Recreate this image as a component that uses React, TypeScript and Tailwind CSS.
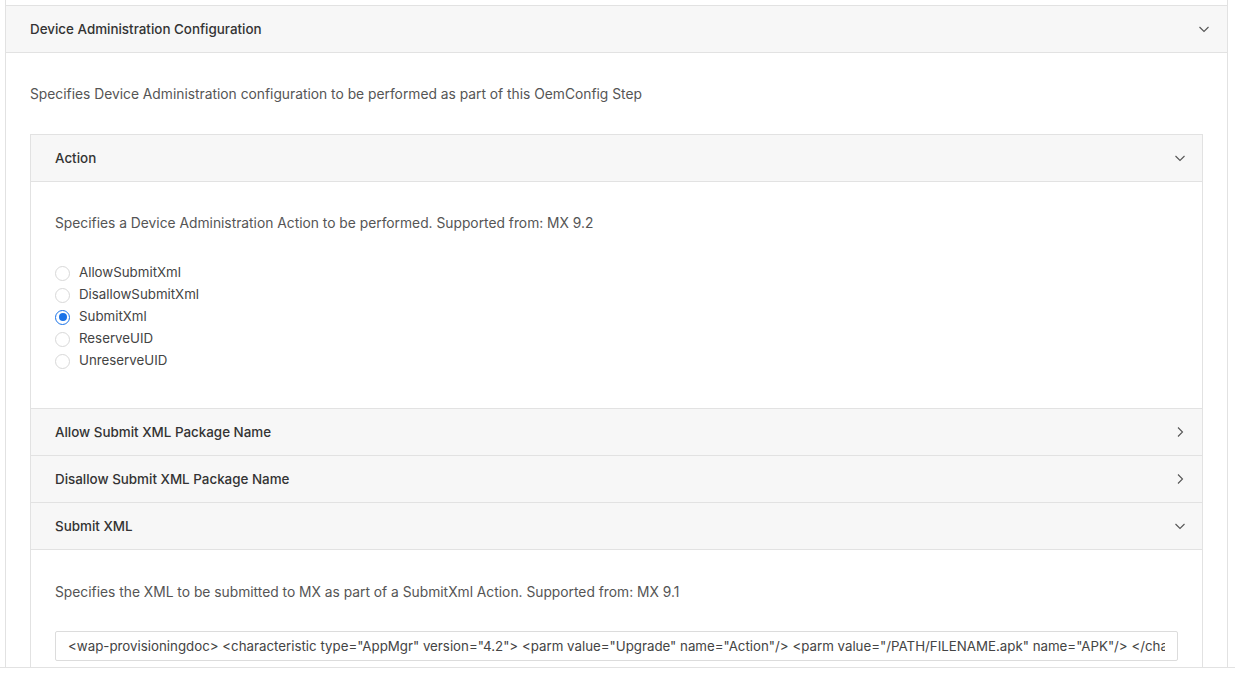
import type { ReactNode } from "react";

const FONT = "font-['Inter','Noto_Sans',sans-serif]";

function Chevron({ open }: { open: boolean }) {
  return (
    <svg
      width="12"
      height="12"
      viewBox="0 0 12 12"
      fill="none"
      stroke="#555"
      strokeWidth="1.1"
      className={open ? "" : "-rotate-90"}
    >
      <path d="M1.5 4l4.5 4.5L10.5 4" />
    </svg>
  );
}

function PanelHeader({ title, open, first }: { title: string; open: boolean; first?: boolean }) {
  return (
    <div
      className={`flex items-center justify-between bg-[#f7f7f7] pl-6 pr-[16px] ${
        first ? "h-[46px]" : "h-[47px] border-t border-[#e2e2e2]"
      }`}
    >
      <span className="text-[13.4px] font-medium text-[#333]">{title}</span>
      <Chevron open={open} />
    </div>
  );
}

function Radio({ label, checked }: { label: string; checked?: boolean }) {
  return (
    <label className="flex h-[22px] items-center gap-[9px]">
      <span
        className={`flex h-[15px] w-[15px] items-center justify-center rounded-full border ${
          checked ? "border-[#1a73e8]" : "border-[#d8d8d8]"
        }`}
      >
        {checked && <span className="h-[8px] w-[8px] rounded-full bg-[#1a73e8]" />}
      </span>
      <span className="text-[13.3px] text-[#444]">{label}</span>
    </label>
  );
}

function Desc({ children }: { children: ReactNode }) {
  return <p className="text-[13.8px] leading-[18px] text-[#555]">{children}</p>;
}

const ACTIONS = ["AllowSubmitXml", "DisallowSubmitXml", "SubmitXml", "ReserveUID", "UnreserveUID"];

const XML =
  '<wap-provisioningdoc> <characteristic type="AppMgr" version="4.2"> <parm value="Upgrade" name="Action"/> <parm value="/PATH/FILENAME.apk" name="APK"/> </characteristic> </wap-provisioningdoc>';

export default function App() {
  return (
    <div className={`flex h-[674px] w-[1235px] flex-col overflow-hidden bg-white ${FONT}`}>
      <div className="h-[667px] overflow-hidden">
        <div className="ml-[5px] w-[1223px] border-x border-[#e2e2e2] pt-[5px]">
          <div className="border-t border-[#e2e2e2]">
            <div className="flex h-[46px] items-center justify-between bg-[#f7f7f7] pl-6 pr-[17px]">
              <span className="text-[13.4px] font-medium text-[#333]">
                Device Administration Configuration
              </span>
              <Chevron open />
            </div>
          </div>
          <div className="border-t border-[#e2e2e2] px-6 pt-[32px]">
            <Desc>Specifies Device Administration configuration to be performed as part of this OemConfig Step</Desc>
            <div className="mt-[31px] border border-[#e2e2e2]">
              <PanelHeader title="Action" open first />
              <div className="border-t border-[#e2e2e2] px-6 pt-[32px] pb-[36px]">
                <Desc>Specifies a Device Administration Action to be performed. Supported from: MX 9.2</Desc>
                <div className="mt-[30px] flex flex-col">
                  {ACTIONS.map((a) => (
                    <Radio key={a} label={a} checked={a === "SubmitXml"} />
                  ))}
                </div>
              </div>
              <PanelHeader title="Allow Submit XML Package Name" open={false} />
              <PanelHeader title="Disallow Submit XML Package Name" open={false} />
              <PanelHeader title="Submit XML" open />
              <div className="border-t border-[#e2e2e2] px-6 pt-[33px] pb-6">
                <Desc>Specifies the XML to be submitted to MX as part of a SubmitXml Action. Supported from: MX 9.1</Desc>
                <input
                  readOnly
                  value={XML}
                  className="mt-[30px] block h-[30px] w-full rounded-[2px] border border-[#dcdcdc] px-3 text-[13.3px] text-[#444] outline-none"
                />
              </div>
            </div>
          </div>
        </div>
      </div>
      <div className="flex-1 border-t border-[#e2e2e2] bg-white" />
    </div>
  );
}
